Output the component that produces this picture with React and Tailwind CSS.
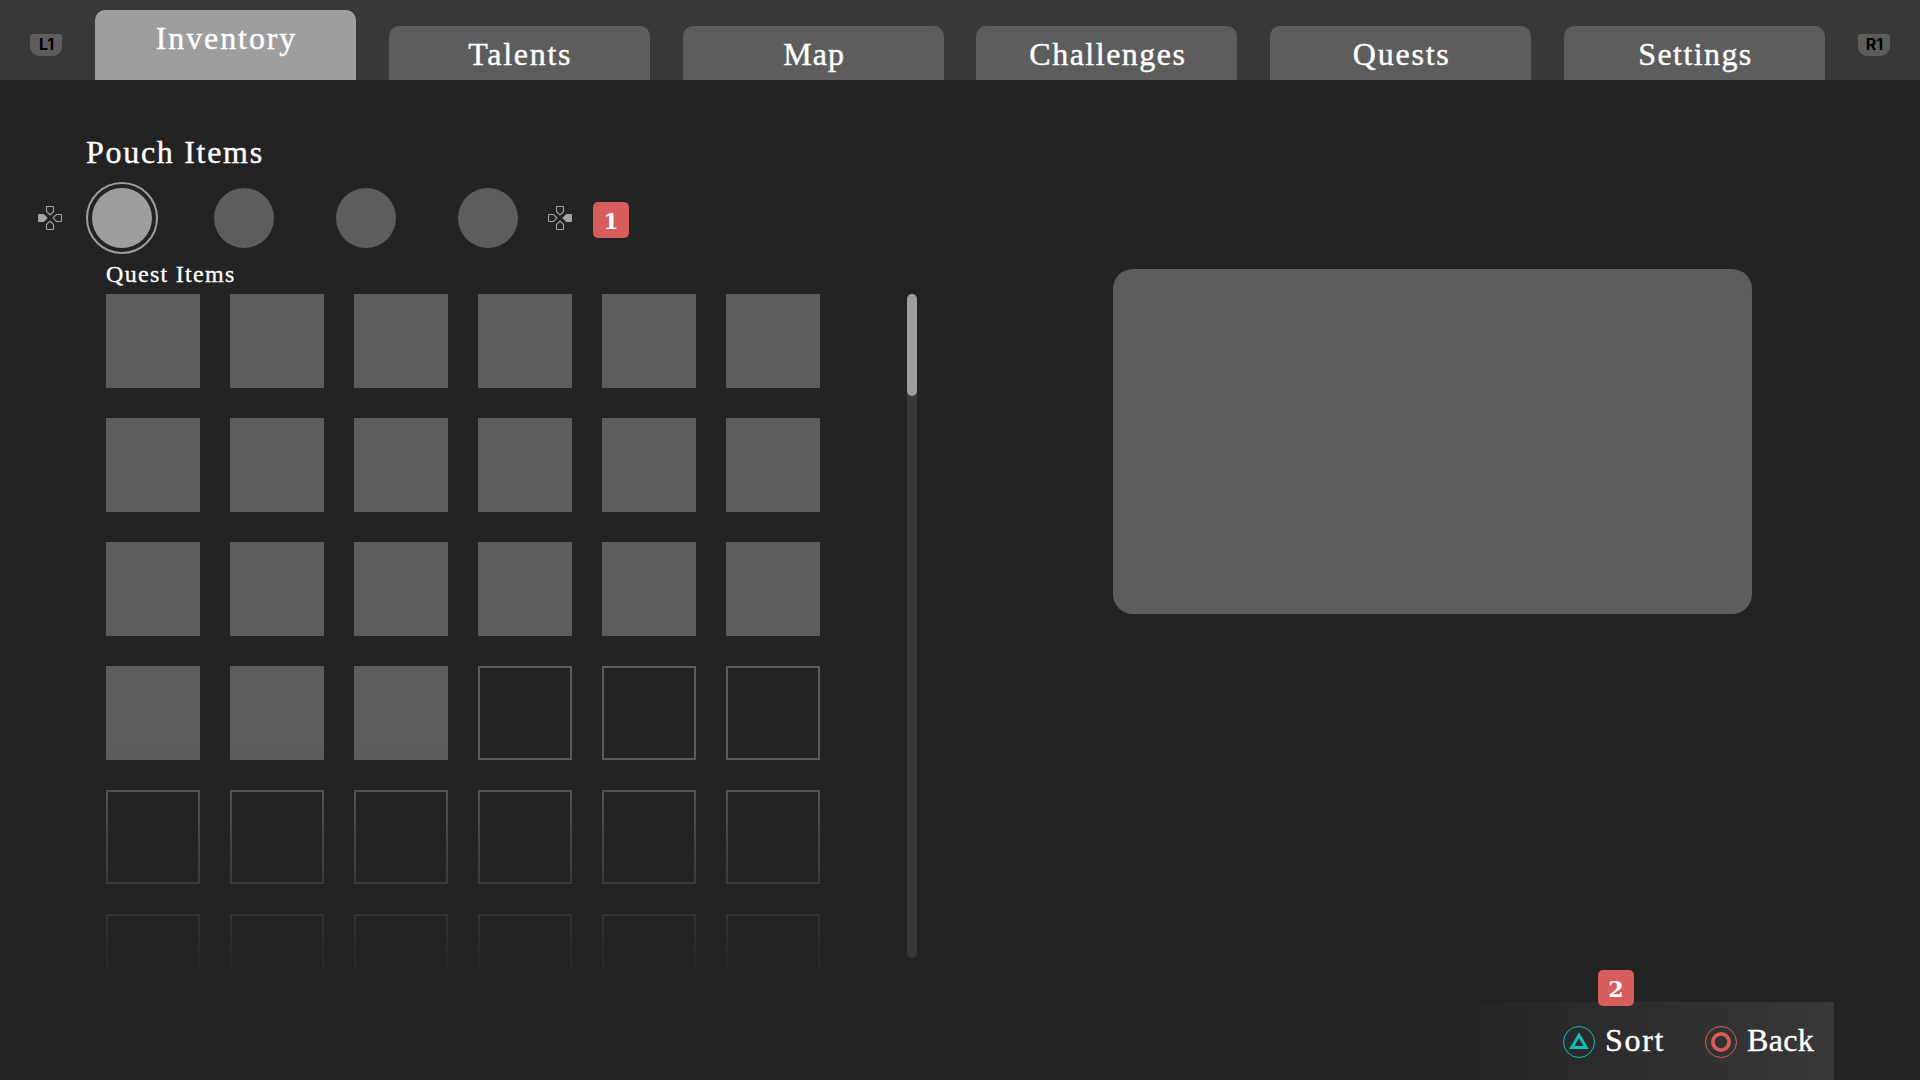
import React, { useState } from 'react';

const TABS = [
  { name: 'Inventory', tracking: 'tracking-[1.9px]' },
  { name: 'Talents', tracking: 'tracking-[1.7px]' },
  { name: 'Map', tracking: 'tracking-[1px]' },
  { name: 'Challenges', tracking: 'tracking-[1.5px]' },
  { name: 'Quests', tracking: 'tracking-[1.8px]' },
  { name: 'Settings', tracking: 'tracking-[1.4px]' },
];

const SLOT_COUNT = 36;
const FILLED_SLOTS = 21;

const ShoulderButton = ({ label }) => (
  <div className="mt-[34px] h-[22px] w-8 rounded-t-[2px] rounded-b-[9px] bg-[#5d5d5d] pl-px text-center font-['Inter',sans-serif] text-base font-bold leading-[21px] text-black">
    {label}
  </div>
);

const DPad = ({ active }) => {
  const arrow = 'M8.5 1l.5-.5h6l.5.5v4.5L12 9 8.5 5.5z';
  const directions = [
    { name: 'up', angle: 0 },
    { name: 'right', angle: 90 },
    { name: 'down', angle: 180 },
    { name: 'left', angle: 270 },
  ];

  return (
    <svg className="h-6 w-6 text-[#a3a3a3]" viewBox="0 0 24 24" stroke="currentColor" strokeWidth="1.1">
      {directions.map(({ name, angle }) => (
        <path
          key={name}
          d={arrow}
          transform={`rotate(${angle} 12 12)`}
          fill={name === active ? 'currentColor' : 'none'}
        />
      ))}
    </svg>
  );
};

const Marker = ({ children }) => (
  <div className="h-9 w-9 rounded-[5px] bg-[#d75c5c] text-center font-['DejaVu_Serif',serif] text-[22px] font-bold leading-[38px] text-white [-webkit-text-stroke:0]">
    {children}
  </div>
);

const App = () => {
  const [activeTab, setActiveTab] = useState('Inventory');
  const [activePouch, setActivePouch] = useState(0);

  return (
    <div className="flex h-[1080px] w-[1920px] flex-col overflow-hidden bg-[#232323] font-['Liberation_Serif',serif] text-white">
      <header className="flex h-20 justify-between bg-[#383838] px-[30px]">
        <ShoulderButton label="L1" />
        <nav className="flex w-[1730px] items-end justify-between">
          {TABS.map((tab) => (
            <button
              key={tab.name}
              onClick={() => setActiveTab(tab.name)}
              className={`flex w-[261px] items-start justify-center rounded-t-[10px] pt-2 pl-0.5 text-[32px] leading-10 [-webkit-text-stroke:0.4px] ${tab.tracking} ${
                activeTab === tab.name ? 'h-[70px] bg-[#9e9e9e]' : 'h-[54px] bg-[#5d5d5d]'
              }`}
            >
              {tab.name}
            </button>
          ))}
        </nav>
        <ShoulderButton label="R1" />
      </header>

      <main className="flex h-[922px] pt-[52px]">
        <section className="w-[1113px]">
          <h1 className="pl-[86px] text-[32px] leading-10 tracking-[1.7px] [-webkit-text-stroke:0.4px]">Pouch Items</h1>

          <div className="mt-2.5 flex h-[72px] items-center pl-[38px]">
            <DPad active="left" />
            <div className="mx-6 flex gap-[50px]">
              {[0, 1, 2, 3].map((pouch) => (
                <button
                  key={pouch}
                  onClick={() => setActivePouch(pouch)}
                  aria-label={`Pouch ${pouch + 1}`}
                  className={`flex h-[72px] w-[72px] items-center justify-center rounded-full border-2 ${
                    activePouch === pouch ? 'border-[#9e9e9e]' : 'border-transparent'
                  }`}
                >
                  <span
                    className={`h-[60px] w-[60px] shrink-0 rounded-full ${
                      activePouch === pouch ? 'bg-[#9e9e9e]' : 'bg-[#5d5d5d]'
                    }`}
                  />
                </button>
              ))}
            </div>
            <DPad active="right" />
            <div className="ml-[21px] mt-1">
              <Marker>1</Marker>
            </div>
          </div>

          <h2 className="mt-1 pl-[106px] text-2xl leading-8 tracking-[1.3px] [-webkit-text-stroke:0.3px]">Quest Items</h2>

          <div className="mt-1 flex pl-[106px]">
            <div className="grid h-[684px] w-[714px] grid-cols-6 content-start gap-[30px] overflow-hidden [mask-image:linear-gradient(to_bottom,black_455px,transparent_688px)]">
              {Array.from({ length: SLOT_COUNT }, (_, i) => (
                <div
                  key={i}
                  className={`h-[94px] w-[94px] border-2 border-[#5d5d5d] ${i < FILLED_SLOTS ? 'bg-[#5d5d5d]' : ''}`}
                />
              ))}
            </div>
            <div className="ml-[87px] h-[664px] w-2.5 rounded-full bg-[#383838]">
              <div className="h-[102px] rounded-full bg-[#9e9e9e]" />
            </div>
          </div>
        </section>

        <aside className="mt-[137px] h-[345px] w-[639px] rounded-[20px] bg-[#5d5d5d]" />
      </main>

      <footer className="relative ml-[1430px] flex h-[78px] w-[404px] items-start justify-end bg-linear-to-r from-[#232323] to-[#383838] text-[32px] [-webkit-text-stroke:0.4px]">
        <div className="absolute -top-8 left-[168px]">
          <Marker>2</Marker>
        </div>
        <button className="mt-5 flex w-[142px] items-center">
          <svg className="h-8 w-8" viewBox="0 0 32 32" fill="none" stroke="#0bbfb4">
            <circle cx="16" cy="16" r="15.5" />
            <path d="M16 9.3 8.8 21.5h14.4z" strokeWidth="3" />
          </svg>
          <span className="ml-2.5 pb-1 leading-9 tracking-[1.7px]">Sort</span>
        </button>
        <button className="mt-5 flex w-[129px] items-center">
          <svg className="h-8 w-8" viewBox="0 0 32 32" fill="none" stroke="#d75c5c">
            <circle cx="16" cy="16" r="15.5" />
            <circle cx="16" cy="16" r="8.1" strokeWidth="3.8" />
          </svg>
          <span className="ml-2.5 pb-1 leading-9 tracking-[0.3px]">Back</span>
        </button>
      </footer>
    </div>
  );
};

export default App;
